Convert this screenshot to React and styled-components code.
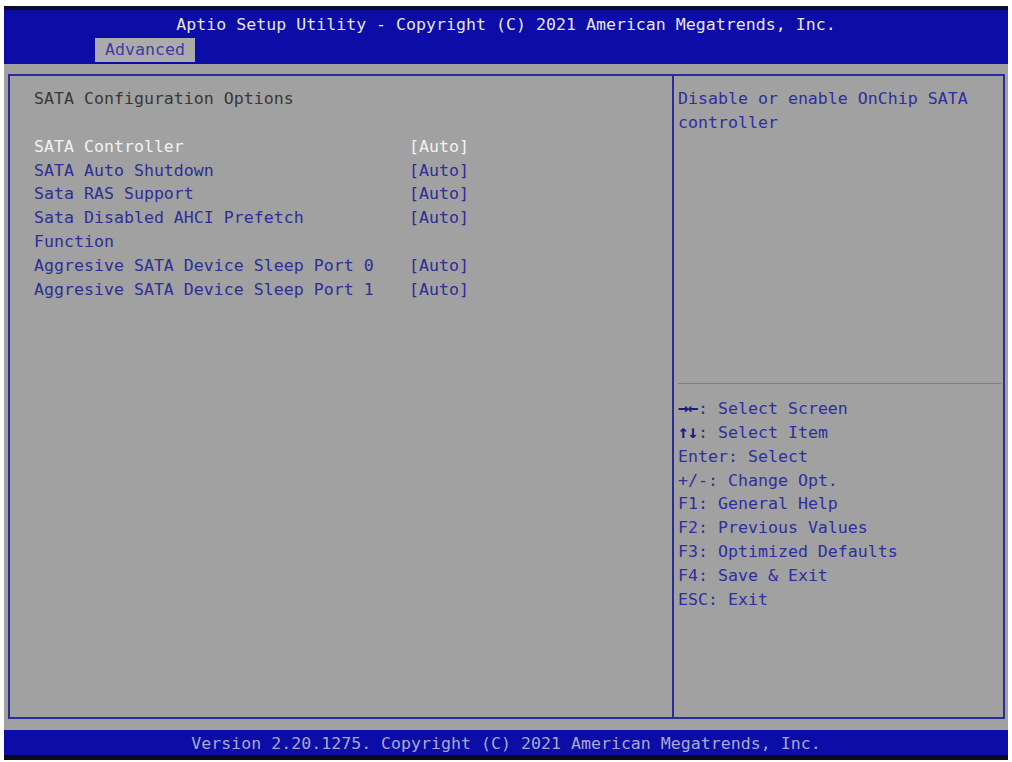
import React from "react";
import styled, { createGlobalStyle } from "styled-components";

const Global = createGlobalStyle`
  html, body { margin: 0; padding: 0; background: #ffffff; }
  body { font-family: "DejaVu Sans Mono", "Liberation Mono", monospace; }
`;

const FONT = `"DejaVu Sans Mono", "Liberation Mono", monospace`;

const Screen = styled.div`
  margin: 6px 4px 2px 4px;
  width: 1004px;
  height: 754px;
  display: flex;
  flex-direction: column;
  font-family: ${FONT};
  font-size: 16.6px;
  line-height: 23.85px;
  background: #a1a1a1;
`;

const Header = styled.header`
  height: 51px;
  border-top: 4px solid #0a0a2a;
  background: #0c0ca6;
  display: flex;
  flex-direction: column;
  padding-top: 3px;
  box-sizing: content-box;
`;

const Title = styled.div`
  height: 24px;
  line-height: 24px;
  text-align: center;
  color: #e4e4ee;
  white-space: pre;
`;

const Tabs = styled.nav`
  display: flex;
  margin-top: 1px;
  padding-left: 91px;
`;

const Tab = styled.div`
  height: 24px;
  line-height: 24px;
  padding: 0 10px;
  background: ${(p) => (p.$active ? "#ababab" : "transparent")};
  color: ${(p) => (p.$active ? "#3c3ca2" : "#e4e4ee")};
`;

const Main = styled.main`
  flex: 1;
  padding: 10px 3px 11px 4px;
  display: flex;
`;

const Panel = styled.section`
  flex: 1;
  border: 2px solid #2c2c98;
  display: grid;
  grid-template-columns: 662px 2px 1fr;
`;

const Divider = styled.div`
  background: #2c2c98;
`;

const LeftPane = styled.div`
  padding: 11px 0 0 24px;
`;

const Heading = styled.div`
  color: #383838;
  margin-bottom: 23.85px;
`;

const ItemGrid = styled.div`
  display: grid;
  grid-template-columns: 350px auto;
  column-gap: 25px;
  justify-content: start;
`;

const Label = styled.div`
  color: ${(p) => (p.$selected ? "#f2f2f2" : "#2e2e96")};
`;

const Value = styled.div`
  color: ${(p) => (p.$selected ? "#f2f2f2" : "#2e2e96")};
  white-space: pre;
`;

const RightPane = styled.div`
  display: grid;
  grid-template-rows: 307px 1px auto;
  padding: 0 2px 0 4px;
`;

const Description = styled.div`
  padding-top: 11px;
  color: #2e2ea0;
`;

const Separator = styled.div`
  background: #7c7c8c;
`;

const HelpList = styled.div`
  padding-top: 13px;
  display: flex;
  flex-direction: column;
`;

const HelpLine = styled.div`
  color: #2e2ea0;
  white-space: pre;
`;

const Key = styled.span`
  color: #2e2ea0;
`;

const ArrowKey = styled.span`
  display: inline-block;
  width: 20px;
  color: #1a1a8a;
  font-weight: 700;
  font-size: 18px;
  letter-spacing: -1px;
  line-height: 1;
`;

const Footer = styled.footer`
  height: 25px;
  border-bottom: 5px solid #0a0a1a;
  background: #0c0ca6;
  color: #a8a8d8;
  text-align: center;
  line-height: 27px;
  white-space: pre;
`;

const items = [
  { label: "SATA Controller", value: "[Auto]", selected: true },
  { label: "SATA Auto Shutdown", value: "[Auto]" },
  { label: "Sata RAS Support", value: "[Auto]" },
  { label: "Sata Disabled AHCI Prefetch Function", value: "[Auto]" },
  { label: "Aggresive SATA Device Sleep Port 0", value: "[Auto]" },
  { label: "Aggresive SATA Device Sleep Port 1", value: "[Auto]" },
];

const help = [
  { key: "\u2192\u2190", rest: ": Select Screen", arrow: true },
  { key: "\u2191\u2193", rest: ": Select Item", arrow: true },
  { key: "Enter", rest: ": Select" },
  { key: "+/-", rest: ": Change Opt." },
  { key: "F1", rest: ": General Help" },
  { key: "F2", rest: ": Previous Values" },
  { key: "F3", rest: ": Optimized Defaults" },
  { key: "F4", rest: ": Save & Exit" },
  { key: "ESC", rest: ": Exit" },
];

export default function App() {
  return (
    <>
      <Global />
      <Screen>
        <Header>
          <Title>Aptio Setup Utility - Copyright (C) 2021 American Megatrends, Inc.</Title>
          <Tabs>
            <Tab $active>Advanced</Tab>
          </Tabs>
        </Header>
        <Main>
          <Panel>
            <LeftPane>
              <Heading>SATA Configuration Options</Heading>
              <ItemGrid>
                {items.map((it) => (
                  <React.Fragment key={it.label}>
                    <Label $selected={it.selected}>{it.label}</Label>
                    <Value $selected={it.selected}>{it.value}</Value>
                  </React.Fragment>
                ))}
              </ItemGrid>
            </LeftPane>
            <Divider />
            <RightPane>
              <Description>Disable or enable OnChip SATA controller</Description>
              <Separator />
              <HelpList>
                {help.map((h) => (
                  <HelpLine key={h.key}>
                    {h.arrow ? <ArrowKey>{h.key}</ArrowKey> : <Key>{h.key}</Key>}
                    {h.rest}
                  </HelpLine>
                ))}
              </HelpList>
            </RightPane>
          </Panel>
        </Main>
        <Footer>Version 2.20.1275. Copyright (C) 2021 American Megatrends, Inc.</Footer>
      </Screen>
    </>
  );
}
